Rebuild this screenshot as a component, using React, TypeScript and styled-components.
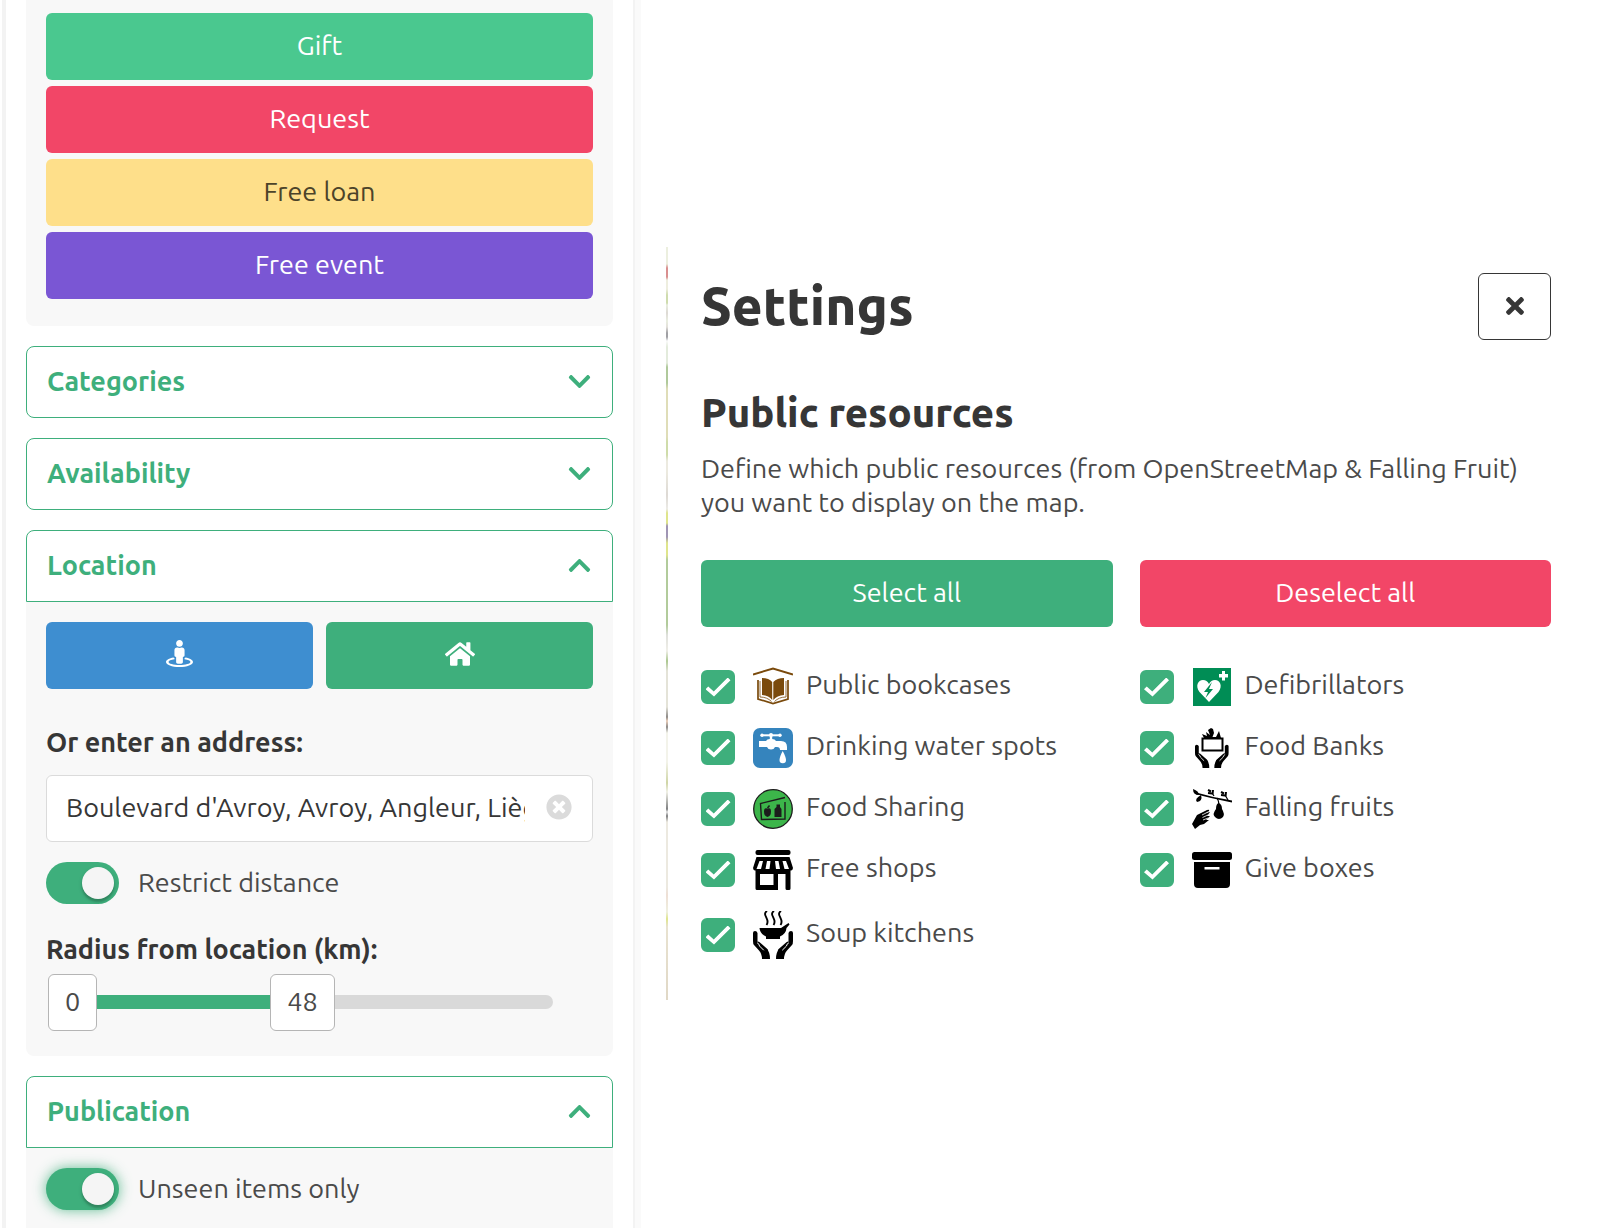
import React, { useState } from "react";
import styled, { createGlobalStyle, css } from "styled-components";
import { FaChevronDown, FaChevronUp, FaHome, FaStreetView, FaTimes, FaTimesCircle } from "react-icons/fa";

const color = {
  primary: "#3eaf7c",
  success: "#4ac88f",
  danger: "#f24667",
  warning: "#fedf8a",
  purple: "#7a56d4",
  info: "#3e8ed0",
  text: "#4a4a4a",
  strong: "#363636",
  panel: "#f8f8f8",
  border: "#dbdbdb",
};

const GlobalStyle = createGlobalStyle`
  *, *::before, *::after { box-sizing: border-box; }
  body {
    margin: 0;
    background: #fff;
    color: ${color.text};
    font-family: Ubuntu, "Noto Sans", sans-serif;
    font-size: 27px;
    line-height: 34px;
  }
  button, input { font: inherit; color: inherit; }
  h1, h2, p, ul { margin: 0; padding: 0; }
`;

const Page = styled.div`
  display: flex;
  min-height: 100vh;
`;

const Sidebar = styled.aside`
  flex: 0 0 calc(40% - 7px);
  min-width: 0;
  margin-left: 2px;
  padding: 0 20px;
  border: solid #f3f3f3;
  border-width: 0 2px 0 4px;
  display: flex;
  flex-direction: column;
  gap: 20px;
`;

const Panel = styled.section<{ $grow?: boolean }>`
  display: flex;
  flex-direction: column;
  flex: ${(p) => (p.$grow ? "1 0 auto" : "0 0 auto")};
`;

const PanelHeader = styled.button<{ $open?: boolean }>`
  display: flex;
  align-items: center;
  justify-content: space-between;
  height: 72px;
  padding: 0 20px 2px;
  border: 1px solid ${color.primary};
  border-radius: ${(p) => (p.$open ? "8px 8px 0 0" : "8px")};
  background: #fff;
  color: ${color.primary};
  font-weight: 750;
  cursor: pointer;
`;

const PanelBody = styled.div<{ $flat?: boolean }>`
  flex: 1 0 auto;
  padding: ${(p) => (p.$flat ? "20px 20px 16px" : "20px 20px 26px")};
  border-radius: ${(p) => (p.$flat ? "0" : "0 0 8px 8px")};
  background: ${color.panel};
`;

const TypeList = styled.div`
  display: flex;
  flex-direction: column;
  gap: 6px;
  padding: 13px 20px 27px;
  border-radius: 0 0 8px 8px;
  background: ${color.panel};
`;

const Button = styled.button<{ $bg: string; $fg?: string }>`
  display: flex;
  align-items: center;
  justify-content: center;
  height: 67px;
  width: 100%;
  padding: 0 16px 4px;
  border: 0;
  border-radius: 6px;
  background: ${(p) => p.$bg};
  color: ${(p) => p.$fg ?? "#fff"};
  cursor: pointer;
`;

const ButtonPair = styled.div<{ $gap: number }>`
  display: grid;
  grid-template-columns: 1fr 1fr;
  gap: ${(p) => p.$gap}px;
`;

const fieldTitle = css`
  display: block;
  color: ${color.strong};
  font-weight: 750;
`;

const FieldLabel = styled.label`
  ${fieldTitle}
  margin: 36px 0 16px;
`;

const RangeTitle = styled.label`
  ${fieldTitle}
  margin: 28px 0 8px;
`;

const AddressBox = styled.div`
  display: flex;
  align-items: center;
  height: 67px;
  padding: 0 20px 0 19px;
  border: 1px solid ${color.border};
  border-radius: 6px;
  background: #fff;
  color: ${color.strong};
`;

const AddressInput = styled.input`
  flex: 1;
  min-width: 0;
  height: 100%;
  margin-right: 21px;
  padding: 0 0 4px;
  border: 0;
  outline: 0;
  background: none;
`;

const ClearButton = styled.button`
  display: flex;
  padding: 0 0 4px;
  border: 0;
  background: none;
  color: ${color.border};
  cursor: pointer;
`;

const SwitchLabel = styled.label`
  display: flex;
  align-items: center;
  gap: 19px;
  height: 42px;
  cursor: pointer;
`;

const SwitchText = styled.span`
  padding-bottom: 2px;
`;

const SwitchInput = styled.input<{ $glow?: boolean }>`
  appearance: none;
  flex: none;
  display: flex;
  align-items: center;
  width: 73px;
  height: 42px;
  margin: 0;
  padding: 0 5px;
  border-radius: 21px;
  background: #b5b5b5;
  box-shadow: ${(p) => (p.$glow ? "0 0 13px rgba(62, 175, 124, 0.8)" : "none")};
  cursor: pointer;

  &::before {
    content: "";
    width: 32px;
    height: 32px;
    border-radius: 50%;
    background: #f5f5f5;
    box-shadow: 0 3px 2px rgba(0, 0, 0, 0.15), 0 2px 4px rgba(0, 0, 0, 0.15);
  }
  &:checked { background: ${color.primary}; }
  &:checked::before { margin-left: auto; }
`;

const Restrict = styled.div`
  margin-top: 20px;
`;

const Slider = styled.div`
  position: relative;
  display: flex;
  align-items: center;
  height: 56px;
  margin: 0 40px 0 2px;
`;

const Track = styled.div`
  flex: 1;
  height: 14px;
  border-radius: 7px;
  background: #d9d9d9;
`;

const Fill = styled.div`
  width: 50%;
  height: 14px;
  background: ${color.primary};
`;

const Thumb = styled.output<{ $at: string }>`
  position: absolute;
  top: 0;
  left: ${(p) => p.$at};
  height: 57px;
  padding: 9px 16px 0;
  border: 1px solid #b5b5b5;
  border-radius: 6px;
  background: #fff;
  pointer-events: none;
`;

const RangeInput = styled.input`
  position: absolute;
  inset: 0;
  width: 100%;
  height: 100%;
  margin: 0;
  opacity: 0;
  cursor: pointer;
`;

const Main = styled.main`
  flex: 1;
  min-width: 0;
  display: flex;
  align-items: flex-start;
  padding: 247px 49px 40px 25px;
  border-left: 6px solid #fafafa;
`;

const MapEdge = styled.div`
  flex: none;
  align-self: flex-start;
  width: 2px;
  height: 753px;
  background: linear-gradient(
    #ecefdf 0 17px, #d98f8f 21px 30px, #eeeedf 33px 42px, #cfdcae 48px 56px, #e9eee0 58px,
    #ddd9d4 66px, #e9eee0 74px, #e3e0da 80px, #a0a0a4 86px 90px, #fafafa 94px, #e3ebdc 100px 116px,
    #b0c99b 120px 136px, #dfddb8 142px 190px, #cfdcaa 195px 208px, #eceae0 214px 225px,
    #ddd9d4 248px, #ecebe6 262px, #dfe58c 266px 276px, #a095b4 279px 290px, #dfe58c 296px 308px,
    #b2cb9b 313px 378px, #dfe0dc 388px, #f0efe8 404px, #abc78f 414px, #e4e3d8 424px 460px,
    #8d8a88 470px, #ecd0bc 474px, #8d8a88 480px, #f3f3ea 486px 515px, #cfd5a5 536px, #f1f1e7 545px,
    #7f8081 562px, #e9e9e9 565px, #7f8081 569px, #ece9e0 575px 640px, #eedfd5 648px,
    #eff0df 665px, #dfe58c 672px, #e8e2d0 680px, #e0d8c6 753px
  );
`;

const Settings = styled.section`
  flex: 1;
  min-width: 0;
  margin-left: 33px;
  padding-top: 26px;
`;

const SettingsHead = styled.header`
  display: flex;
  align-items: center;
  justify-content: space-between;
`;

const Title = styled.h1`
  padding-bottom: 2px;
  color: ${color.strong};
  font-size: 53px;
  line-height: 64px;
  font-weight: 800;
`;

const Subtitle = styled.h2`
  margin-top: 49px;
  color: ${color.strong};
  font-size: 40px;
  line-height: 48px;
  font-weight: 800;
`;

const Intro = styled.p`
  margin: 14px 0 41px;
`;

const CloseButton = styled.button`
  display: flex;
  align-items: center;
  justify-content: center;
  width: 73px;
  height: 67px;
  padding: 0 0 2px;
  border: 1px solid ${color.strong};
  border-radius: 6px;
  background: #fff;
  color: ${color.strong};
  cursor: pointer;
`;

const Columns = styled.div`
  display: grid;
  grid-template-columns: 1fr 1fr;
  gap: 27px;
  align-items: start;
  margin-top: 40px;
`;

const ResourceList = styled.ul`
  display: flex;
  flex-direction: column;
  gap: 21px;
  list-style: none;
`;

const ResourceLabel = styled.label`
  display: flex;
  align-items: center;
  min-height: 40px;
  cursor: pointer;
`;

const ResourceName = styled.span`
  padding-bottom: 6px;
`;

const Check = styled.input`
  appearance: none;
  flex: none;
  display: grid;
  place-items: center;
  width: 34px;
  height: 34px;
  margin: 0 18px 0 0;
  border: 2px solid ${color.primary};
  border-radius: 6px;
  cursor: pointer;

  &:checked { background: ${color.primary}; }
  &:checked::before {
    content: "";
    width: 25px;
    height: 19px;
    background: #fff;
    clip-path: polygon(0 62%, 11% 48%, 33% 74%, 89% 0, 100% 14%, 34% 100%);
  }
`;

const ResourceIcon = styled.svg`
  flex: none;
  width: 40px;
  margin-right: 13px;
`;

const Hands = () => (
  <g fill="#000">
    <path d="M0 22Q0 20 2 20T4.500 22V31L14 38.500Q17 41 17 48H9Q9 43 6 39.500L1 34Q0 33 0 30Z" />
    <path d="M40 22Q40 20 38 20T35.500 22V31L26 38.500Q23 41 23 48H31Q31 43 34 39.500L39 34Q40 33 40 30Z" />
    <path d="M5 32.500l8 7M35 32.500l-8 7" stroke="#000" strokeWidth="4" strokeLinecap="round" />
    <path d="M4.500 32q2 1 2 3l4 4M35.500 32q-2 1-2 3l-4 4" stroke="#fff" strokeWidth="1" fill="none" strokeLinecap="round" />
  </g>
);

const icons = {
  books: (
    <ResourceIcon viewBox="0 0 40 40" height="40" aria-hidden="true">
      <g fill="none" stroke="#7a4a0c" strokeWidth="2">
        <path d="M0 7.500L20 1.500L40 7.500" />
        <path d="M5 13V32L20 36.500L35 32V13" strokeWidth="1.700" />
      </g>
      <path d="M9 11Q16 11 19.200 15V33Q16 28.500 9 28Z" fill="#7a4a0c" />
      <path d="M31 11Q24 11 20.300 15V33Q24 28.500 31 28Z" fill="#7a4a0c" />
      <path d="M7 14V30Q14 30 18.500 34.500M33 14V30Q26 30 21.500 34.500" fill="none" stroke="#7a4a0c" strokeWidth="0.800" />
    </ResourceIcon>
  ),
  water: (
    <ResourceIcon viewBox="0 0 40 40" height="40" aria-hidden="true">
      <rect width="40" height="40" rx="7" fill="#3584bd" />
      <g fill="#fff">
        <path d="M9 6.300H27V8.300H9Z" />
        <circle cx="9" cy="7.300" r="1.700" />
        <circle cx="18" cy="7" r="2" />
        <circle cx="27" cy="7.300" r="1.700" />
        <path d="M16.800 8H19.200V11Q22 11 23 13H28Q34 13 34 19V22H27Q27 19 24 19H22Q21 21.500 18 21.500T14 19H6V13H13Q14 11 16.800 11Z" />
        <path d="M29.700 23Q33 29 33 32A3.200 3.200 0 0 1 26.500 32Q26.500 29 29.700 23Z" />
      </g>
    </ResourceIcon>
  ),
  sharing: (
    <ResourceIcon viewBox="0 0 40 40" height="40" aria-hidden="true">
      <circle cx="20" cy="20" r="19.300" fill="#3cb54a" stroke="#1c1c1c" strokeWidth="1.300" />
      <path d="M32 8.500L7.500 14.500L8.500 30.500L32 30V13" fill="none" stroke="#1c1c1c" strokeWidth="1.400" />
      <path d="M14.500 19.500Q18 18 18 22.500T14.500 28Q11 27 11 22.500T14.500 19.500Z" fill="#1c1c1c" />
      <path d="M14.500 19L16.500 16.500" stroke="#1c1c1c" strokeWidth="1.500" />
      <path d="M23.500 15.500H27V18L28.500 20V28H21.500V20L23.500 18Z" fill="#1c1c1c" />
    </ResourceIcon>
  ),
  shop: (
    <ResourceIcon viewBox="0 0 40 40" height="40" aria-hidden="true">
      <rect x="2.500" width="35" height="5" rx="2" />
      <path d="M3.500 7H36.500L40 18Q39.500 21 37.500 20.500V38.500Q37.500 40 36 40H34Q32.500 40 32.500 38.500V24H25V40H4Q2.500 40 2.500 38.500V20.500Q.5 21 0 18ZM7 24V35H20.500V24Z" fillRule="evenodd" />
      <path d="M6.500 11L3.500 19H8L10 11ZM14 11L12.500 19H16.500L17.500 11ZM22 11L23 19H27L25.500 11ZM29.500 11L31.500 19H36L33 11Z" fill="#fff" />
    </ResourceIcon>
  ),
  soup: (
    <ResourceIcon viewBox="0 0 40 48" height="48" aria-hidden="true">
      <Hands />
      <path d="M6.500 17H28L35.500 12L36.500 13.500L33.500 17Q33 23 27 25.500V28H13V25.500Q7 23 6.500 17Z" />
      <path d="M14 0C8 4 18 8 13.500 14M21 0C15 4 25 8 20.500 14M28 0C22 4 32 8 27.500 14" fill="none" stroke="#000" strokeWidth="1.900" />
    </ResourceIcon>
  ),
  heart: (
    <ResourceIcon viewBox="0 0 40 40" height="40" aria-hidden="true">
      <rect x="1" y="1" width="38" height="38" fill="#008d55" />
      <path d="M17 35L7.500 25C3 19 6 13 11 13Q15 13 17 17Q19 13 23 13C28 13 31 19 26.500 25Z" fill="#fff" />
      <path d="M20 15L12 25H16L13.500 31L21 22H17Z" fill="#008d55" />
      <path d="M27 7H30V4H33V7H36V10.500H33V13.500H30V10.500H27Z" fill="#fff" />
    </ResourceIcon>
  ),
  bank: (
    <ResourceIcon viewBox="0 0 40 40" height="40" aria-hidden="true">
      <g transform="translate(3 0) scale(.84 .834)"><Hands /></g>
      <path d="M10.500 10.500H30.500V22.500H10.500Z" fill="#fff" stroke="#000" strokeWidth="2" />
      <path d="M12 10L10 6L15 8L14 4L18 7L16 2L19 0L21 1L22 5L20.500 9H24L27 3L29 10Z" />
    </ResourceIcon>
  ),
  fruit: (
    <ResourceIcon viewBox="0 0 40 40" height="40" aria-hidden="true">
      <path d="M3 4Q20 9 40 12.500" fill="none" stroke="#000" strokeWidth="1.800" />
      <path d="M1 0Q7 2 7 6Q1 6 1 0ZM9 6Q11 12 5 13Q2 10 9 6Z" />
      <path d="M16 1l3 1.500M16 4l4 .5M21 1l-.5 4.500M29 3l3 1.500M29 6l4 .5M34 3l-.5 4.500" fill="none" stroke="#000" strokeWidth="2" />
      <path d="M20 4L22 7M33 6L36 11M25 9Q27 12 27 16" fill="none" stroke="#000" strokeWidth="1.200" />
      <path d="M26.500 14Q30 15 30 20Q33 25 31 28Q27 32 23 28Q20 25 24 20Q24 15 26.500 14Z" />
      <path d="M0 35L5 26L15 21Q18 20 17 22L14 24L18 23L15 27L18 27L14 31L17 31L12 35L8 36L3 40Z" />
      <path d="M10 26L16 23M10.500 28.500L16 26M11 31L16 29" stroke="#fff" strokeWidth="0.800" />
    </ResourceIcon>
  ),
  box: (
    <ResourceIcon viewBox="0 0 40 40" height="40" aria-hidden="true">
      <rect y="2" width="40" height="8" rx="2.500" />
      <path d="M2 12H38V34Q38 38 34 38H6Q2 38 2 34ZM12.500 17V19.500H27.500V17Z" fillRule="evenodd" />
    </ResourceIcon>
  ),
};

type IconName = keyof typeof icons;
type Resource = { label: string; icon: IconName };

const columns: Resource[][] = [
  [
    { label: "Public bookcases", icon: "books" },
    { label: "Drinking water spots", icon: "water" },
    { label: "Food Sharing", icon: "sharing" },
    { label: "Free shops", icon: "shop" },
    { label: "Soup kitchens", icon: "soup" },
  ],
  [
    { label: "Defibrillators", icon: "heart" },
    { label: "Food Banks", icon: "bank" },
    { label: "Falling fruits", icon: "fruit" },
    { label: "Give boxes", icon: "box" },
  ],
];

const allLabels = columns.flat().map((r) => r.label);

export default function App() {
  const [selected, setSelected] = useState<string[]>(allLabels);
  const [address, setAddress] = useState("Boulevard d'Avroy, Avroy, Angleur, Liège");
  const [radius, setRadius] = useState(48);

  const toggle = (label: string) =>
    setSelected((s) => (s.includes(label) ? s.filter((x) => x !== label) : [...s, label]));

  return (
    <>
      <GlobalStyle />
      <Page>
        <Sidebar>
          <TypeList>
            <Button $bg={color.success}>Gift</Button>
            <Button $bg={color.danger}>Request</Button>
            <Button $bg={color.warning} $fg="#4c4329">Free loan</Button>
            <Button $bg={color.purple}>Free event</Button>
          </TypeList>

          <PanelHeader aria-expanded="false">Categories<FaChevronDown size={25} /></PanelHeader>
          <PanelHeader aria-expanded="false">Availability<FaChevronDown size={25} /></PanelHeader>

          <Panel>
            <PanelHeader $open aria-expanded="true">Location<FaChevronUp size={25} /></PanelHeader>
            <PanelBody>
              <ButtonPair $gap={13}>
                <Button $bg={color.info} aria-label="Use my position"><FaStreetView size={27} /></Button>
                <Button $bg={color.primary} aria-label="Use my home"><FaHome size={30} /></Button>
              </ButtonPair>
              <FieldLabel htmlFor="address">Or enter an address:</FieldLabel>
              <AddressBox>
                <AddressInput id="address" value={address} onChange={(e) => setAddress(e.target.value)} />
                <ClearButton aria-label="Clear address" onClick={() => setAddress("")}>
                  <FaTimesCircle size={26} />
                </ClearButton>
              </AddressBox>
              <Restrict>
                <SwitchLabel>
                  <SwitchInput type="checkbox" role="switch" defaultChecked />
                  <SwitchText>Restrict distance</SwitchText>
                </SwitchLabel>
              </Restrict>
              <RangeTitle htmlFor="radius">Radius from location (km):</RangeTitle>
              <Slider>
                <Track><Fill style={{ width: `${(radius / 96) * 100}%` }} /></Track>
                <RangeInput id="radius" type="range" min={0} max={96} value={radius} onChange={(e) => setRadius(Number(e.target.value))} />
                <Thumb $at="0">0</Thumb>
                <Thumb $at="44%" htmlFor="radius">{radius}</Thumb>
              </Slider>
            </PanelBody>
          </Panel>

          <Panel $grow>
            <PanelHeader $open aria-expanded="true">Publication<FaChevronUp size={25} /></PanelHeader>
            <PanelBody $flat>
              <SwitchLabel>
                <SwitchInput type="checkbox" role="switch" $glow defaultChecked />
                <SwitchText>Unseen items only</SwitchText>
              </SwitchLabel>
            </PanelBody>
          </Panel>
        </Sidebar>

        <Main>
          <MapEdge />
          <Settings>
            <SettingsHead>
              <Title>Settings</Title>
              <CloseButton aria-label="Close settings"><FaTimes size={26} /></CloseButton>
            </SettingsHead>
            <Subtitle>Public resources</Subtitle>
            <Intro>
              Define which public resources (from OpenStreetMap &amp; Falling Fruit) you want to display on the map.
            </Intro>
            <ButtonPair $gap={27}>
              <Button $bg={color.primary} onClick={() => setSelected(allLabels)}>Select all</Button>
              <Button $bg={color.danger} onClick={() => setSelected([])}>Deselect all</Button>
            </ButtonPair>
            <Columns>
              {columns.map((items, i) => (
                <ResourceList key={i}>
                  {items.map(({ label, icon }) => (
                    <li key={label}>
                      <ResourceLabel>
                        <Check type="checkbox" checked={selected.includes(label)} onChange={() => toggle(label)} />
                        {icons[icon]}
                        <ResourceName>{label}</ResourceName>
                      </ResourceLabel>
                    </li>
                  ))}
                </ResourceList>
              ))}
            </Columns>
          </Settings>
        </Main>
      </Page>
    </>
  );
}
